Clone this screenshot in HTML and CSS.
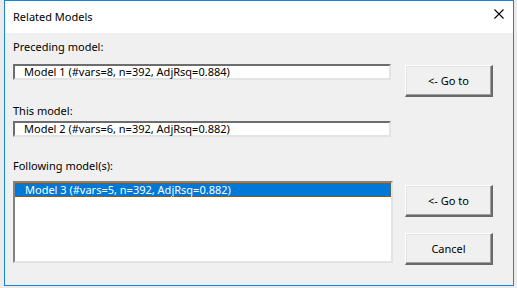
FILE: index.html
```html
<!DOCTYPE html>
<html lang="en">
<head>
    <meta charset="UTF-8">
    <title>Related Models</title>
    <link rel="stylesheet" href="styles.css">
</head>
<body>
    <div class="dialog">
        <div class="titlebar">
            <span class="title">Related Models</span>
            <svg class="close" width="10" height="10" viewBox="0 0 10 10">
                <path d="M0.5 0.5 L9.5 9.5 M9.5 0.5 L0.5 9.5" stroke="#000" stroke-width="1.1" fill="none"/>
            </svg>
        </div>

        <div class="content">
            <div class="left">
                <div class="label first">Preceding model:</div>
                <div class="textbox">Model 1 (#vars=8, n=392, AdjRsq=0.884)</div>

                <div class="label second">This model:</div>
                <div class="textbox">Model 2 (#vars=6, n=392, AdjRsq=0.882)</div>

                <div class="label third">Following model(s):</div>
                <div class="listbox">
                    <div class="item selected">Model 3 (#vars=5, n=392, AdjRsq=0.882)</div>
                </div>
            </div>

            <div class="right">
                <button class="btn goto-prev">&lt;- Go to</button>
                <button class="btn goto-next">&lt;- Go to</button>
                <button class="btn cancel">Cancel</button>
            </div>
        </div>
    </div>
</body>
</html>
```

FILE: styles.css
```css
body {
    margin: 0;
    padding: 0;
    background: #ebebeb;
    font-family: "Noto Sans", "Liberation Sans", Arial, sans-serif;
    font-size: 11px;
    color: #000;
}

.dialog {
    width: 508px;
    height: 284px;
    margin-left: 4px;
    border: 1px solid #1883d7;
    background: #f0f0f0;
    display: flex;
    flex-direction: column;
}

.titlebar {
    height: 32px;
    background: #fff;
    display: flex;
    align-items: center;
    justify-content: space-between;
    padding: 0 9px 0 8px;
}

.title {
    font-size: 11px;
    margin-top: -2px;
}

.close {
    margin-top: -6px;
}

.content {
    display: flex;
    padding-left: 8px;
}

.left {
    width: 379px;
    display: flex;
    flex-direction: column;
}

.label {
    height: 16px;
    line-height: 16px;
}

.label.first {
    margin-top: 6px;
    margin-bottom: 9px;
}

.label.second {
    margin-top: 23px;
    margin-bottom: 2px;
}

.label.third {
    margin-top: 21px;
    margin-bottom: 7px;
}

.textbox {
    box-sizing: border-box;
    width: 378px;
    height: 16px;
    line-height: 12px;
    padding-left: 9px;
    background: #fff;
    border-style: solid;
    border-width: 2px 2px 2px 2px;
    border-color: #6d6d6d #e3e3e3 #e3e3e3 #6d6d6d;
    white-space: nowrap;
}

.listbox {
    box-sizing: border-box;
    width: 380px;
    height: 82px;
    background: #fff;
    border-style: solid;
    border-width: 2px;
    border-color: #828282 #e3e3e3 #e3e3e3 #828282;
}

.item {
    height: 14px;
    line-height: 13px;
    padding-left: 10px;
    white-space: nowrap;
}

.item.selected {
    background: #0078d7;
    color: #fff;
    outline: 1px dotted #8a5a1a;
    outline-offset: -1px;
}

.right {
    display: flex;
    flex-direction: column;
    margin-left: 13px;
}

.btn {
    box-sizing: border-box;
    width: 88px;
    height: 32px;
    padding: 0;
    font-family: inherit;
    font-size: 11px;
    color: #000;
    background: #f0f0f0;
    border-style: solid;
    border-width: 1px 2px 2px 1px;
    border-color: #fff #696969 #696969 #fff;
    box-shadow: inset -1px -1px 0 #a0a0a0, inset 1px 1px 0 #e3e3e3;
}

.goto-prev {
    margin-top: 32px;
}

.goto-next {
    margin-top: 88px;
}

.cancel {
    margin-top: 16px;
}
```
